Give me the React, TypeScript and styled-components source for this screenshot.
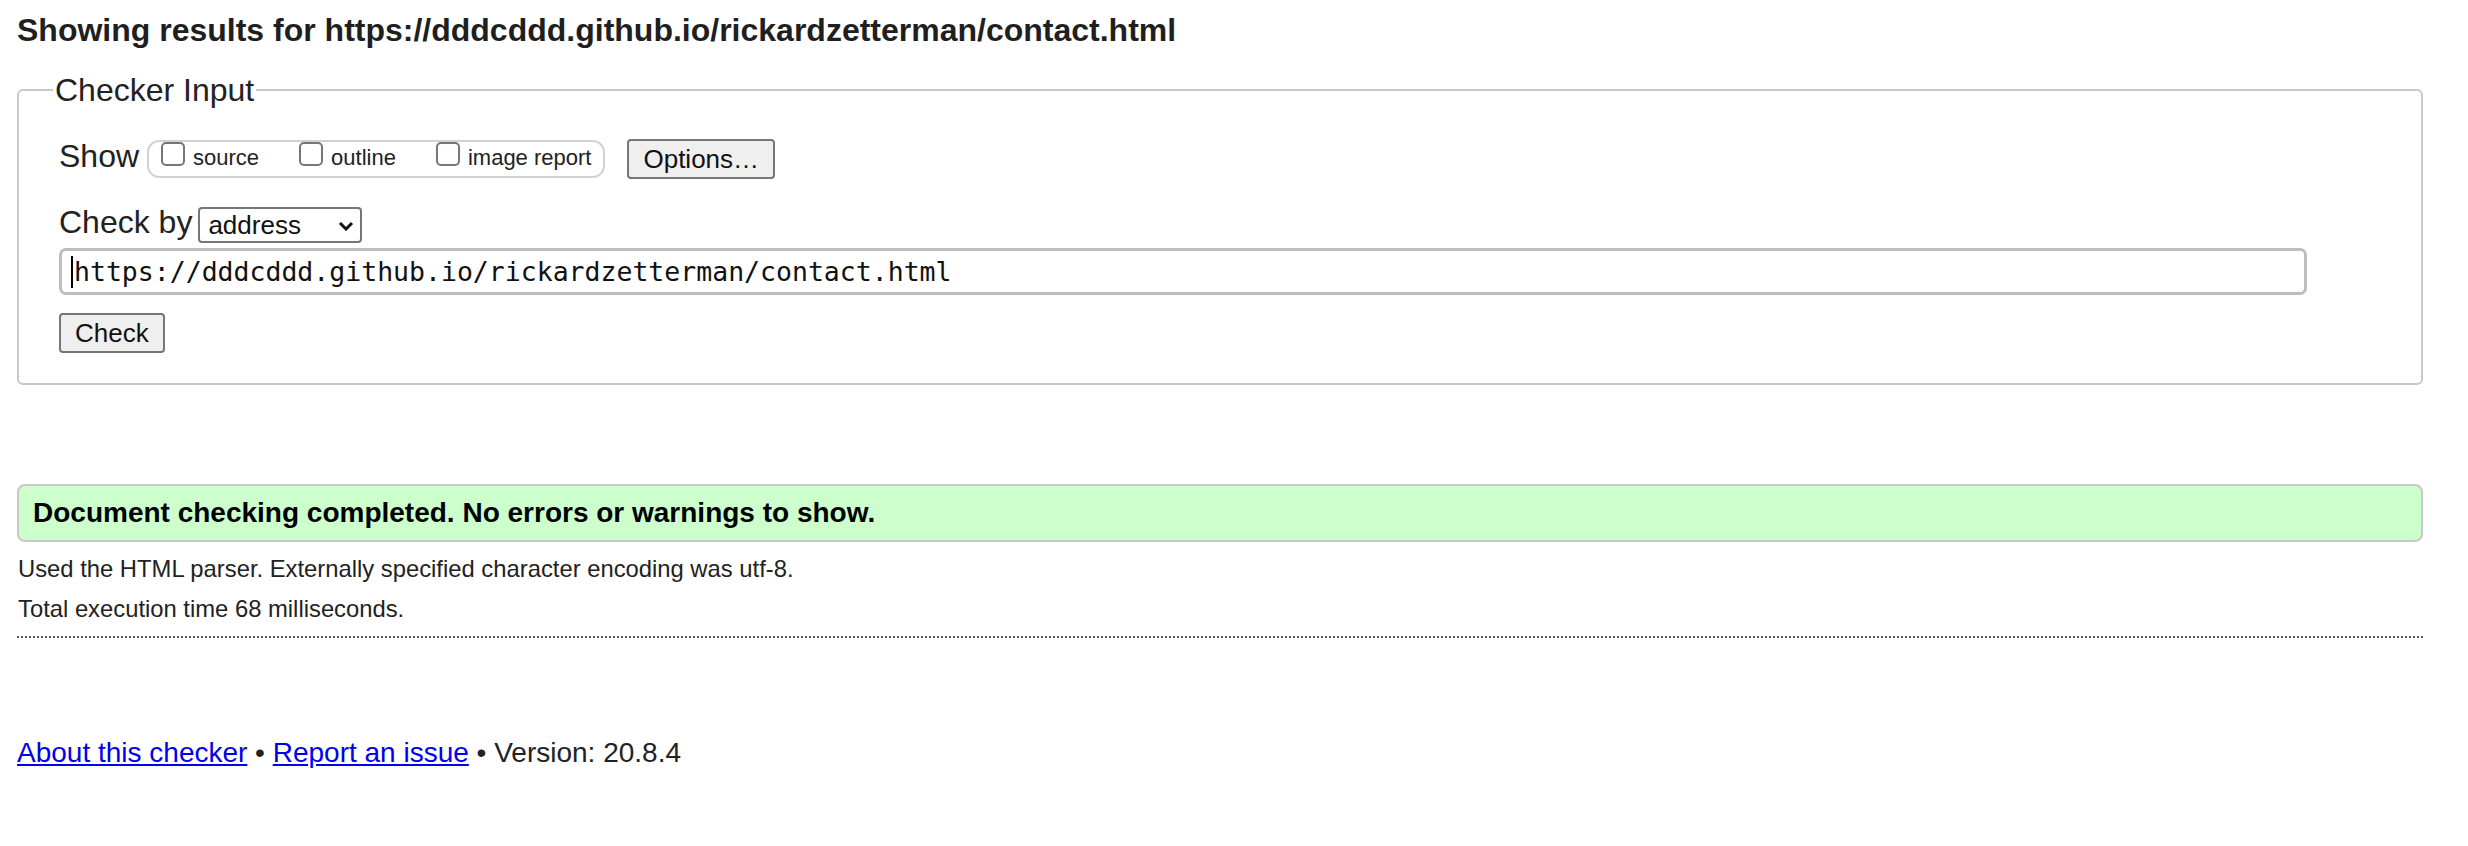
import React from 'react'
import styled, { createGlobalStyle } from 'styled-components'

const GlobalStyle = createGlobalStyle`
    html, body {
        margin: 0;
        background: #fff;
    }
    body {
        font-family: "Liberation Sans", Arial, Helvetica, sans-serif;
        color: #222;
    }
`

const Page = styled.div`
    padding: 12px 45px 40px 17px;
`

const Title = styled.h2`
    margin: 0;
    font-size: 32px;
    line-height: 36px;
    font-weight: 700;
    color: #1f1f1f;
`

const Fieldset = styled.fieldset`
    margin: 24px 0 0;
    padding: 31px 114px 30px 40px;
    border: 2px solid #c8c8c8;
    border-radius: 6px;
    min-width: 0;
`

const Legend = styled.legend`
    font-size: 32px;
    line-height: 36px;
    padding: 0 2px;
    margin-left: -6px;
    color: #222;
`

const Row = styled.div<{ $top?: number; $gap?: number }>`
    display: flex;
    align-items: center;
    gap: ${p => p.$gap || 0}px;
    margin-top: ${p => p.$top || 0}px;
`

const Label = styled.span`
    font-size: 32px;
    line-height: 31px;
    padding-bottom: 5px;
`

const OptionGroup = styled.div`
    display: flex;
    align-items: flex-start;
    gap: 40px;
    box-sizing: border-box;
    height: 38px;
    padding: 0 12px;
    border: 2px solid #d2d2d2;
    border-radius: 12px;
`

const Option = styled.label`
    display: flex;
    align-items: flex-end;
    font-size: 22px;
    line-height: 22px;
`

const Box = styled.input`
    appearance: none;
    box-sizing: border-box;
    width: 24px;
    height: 24px;
    margin: 0 8px 3px 0;
    border: 2px solid #767676;
    border-radius: 5px;
    background: #fff;
`

const Button = styled.button<{ $gap?: number }>`
    box-sizing: border-box;
    height: 40px;
    margin-left: ${p => p.$gap || 0}px;
    padding: 0 14px;
    font-family: inherit;
    font-size: 26px;
    color: #111;
    background: #efefef;
    border: 2px solid #767676;
    border-radius: 4px;
`

const SelectWrap = styled.div`
    position: relative;
    display: flex;
`

const Select = styled.select`
    appearance: none;
    box-sizing: border-box;
    width: 164px;
    height: 36px;
    padding: 0 0 0 8px;
    font-family: inherit;
    font-size: 26px;
    color: #111;
    background: #fff;
    border: 2px solid #767676;
    border-radius: 4px;
`

const Chevron = styled.svg`
    position: absolute;
    right: 8px;
    top: 14px;
    pointer-events: none;
`

const UrlField = styled.div`
    display: flex;
    align-items: center;
    box-sizing: border-box;
    width: 100%;
    height: 47px;
    margin-top: 5px;
    padding-left: 9px;
    border: 3px solid #bdbdbd;
    border-radius: 7px;
    font-family: "DejaVu Sans Mono", "Liberation Mono", monospace;
    font-size: 26.5px;
    color: #111;
`

const Caret = styled.span`
    width: 2px;
    height: 32px;
    margin-right: 1px;
    background: #000;
`

const Notice = styled.div`
    margin-top: 99px;
    padding: 11px 14px;
    border: 2px solid #c8c8c8;
    border-radius: 8px;
    background: #cfc;
    font-size: 28px;
    line-height: 32px;
    font-weight: 700;
    color: #000;
`

const Detail = styled.p`
    margin: 14px 0 0 1px;
    font-size: 23.8px;
    line-height: 26px;
    color: #222;
`

const Dotted = styled.div`
    margin-top: 14px;
    border-top: 2px dotted #555;
`

const Footer = styled.p`
    margin: 99px 0 0;
    font-size: 28px;
    line-height: 32px;
    color: #222;

    a {
        color: #00e;
    }
`

const url = 'https://dddcddd.github.io/rickardzetterman/contact.html'

export default function App() {
    return (
        <Page>
            <GlobalStyle />
            <Title>Showing results for {url}</Title>
            <Fieldset>
                <Legend>Checker Input</Legend>
                <Row $gap={8}>
                    <Label>Show</Label>
                    <OptionGroup>
                        <Option><Box type="checkbox" />source</Option>
                        <Option><Box type="checkbox" />outline</Option>
                        <Option><Box type="checkbox" />image report</Option>
                    </OptionGroup>
                    <Button $gap={14}>Options…</Button>
                </Row>
                <Row $top={28} $gap={6}>
                    <Label>Check by</Label>
                    <SelectWrap>
                        <Select defaultValue="address">
                            <option value="address">address</option>
                            <option value="upload">file upload</option>
                            <option value="text">text input</option>
                        </Select>
                        <Chevron width="16" height="10" viewBox="0 0 16 10">
                            <path d="M2 2 L8 8 L14 2" fill="none" stroke="#111" strokeWidth="3" />
                        </Chevron>
                    </SelectWrap>
                </Row>
                <UrlField>
                    <Caret />
                    {url}
                </UrlField>
                <Row $top={18}>
                    <Button>Check</Button>
                </Row>
            </Fieldset>
            <Notice>Document checking completed. No errors or warnings to show.</Notice>
            <Detail>Used the HTML parser. Externally specified character encoding was utf-8.</Detail>
            <Detail>Total execution time 68 milliseconds.</Detail>
            <Dotted />
            <Footer>
                <a href="#about">About this checker</a> • <a href="#issue">Report an issue</a> • Version: 20.8.4
            </Footer>
        </Page>
    )
}
